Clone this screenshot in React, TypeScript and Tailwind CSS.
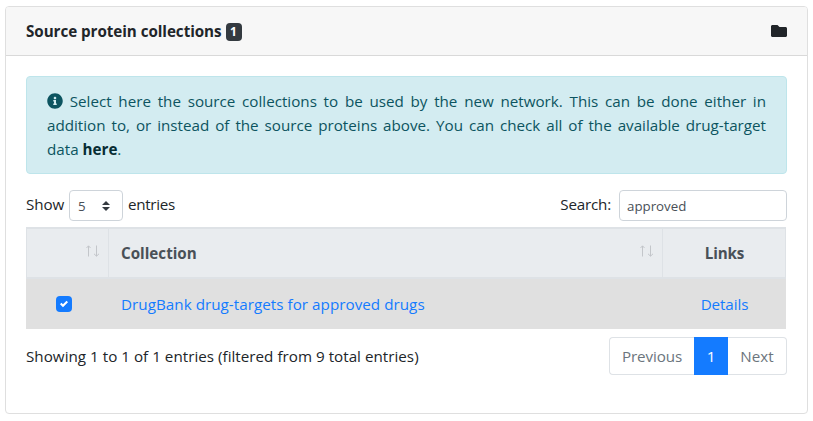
import React from "react";
import { FaFolder, FaInfoCircle } from "react-icons/fa";

function SortArrows() {
  return (
    <svg width="14" height="12" viewBox="0 0 14 12" fill="none" stroke="#c3c6ca" strokeWidth="1">
      <path d="M2.5 11.5V1M0.5 3L2.5 0.8L4.5 3" />
      <path d="M10.5 0.5V11M8 8.8L10.5 11.2L13 8.8" />
    </svg>
  );
}

function Header() {
  return (
    <div className="flex h-[49px] items-center justify-between border-b border-[#d9d9d9] bg-[#f7f7f7] px-5 pb-px">
      <div className="flex items-center font-bold">
        <span className="tracking-[-0.05px]">Source protein collections</span>
        <span className="ml-1 mt-0.5 flex h-[18px] w-4 items-center justify-center rounded bg-[#343a40] text-xs text-white">1</span>
      </div>
      <FaFolder className="size-4 text-[#212529]" />
    </div>
  );
}

function Notice() {
  return (
    <div className="h-[98px] rounded border border-[#bee5eb] bg-[#d3ecf1] px-5 py-3 text-justify leading-6 text-[#0c5460]">
      <FaInfoCircle className="inline size-4 align-[-2px]" /> Select here the source collections to be used by the
      new network. This can be done either in addition to, or instead of the source proteins above. You can check all of
      the available drug-target data <a className="font-bold text-[#062c33]">here</a>.
    </div>
  );
}

function Controls() {
  return (
    <div className="mt-4 flex h-[31px] justify-between">
      <div className="flex items-center">
        <span className="-mt-1 w-[38px] tracking-[-0.1px]">Show</span>
        <div className="ml-[5px] flex h-[31px] w-[54px] items-center justify-between rounded border border-[#ced4da] pl-2 pr-3 text-[13.3px] text-[#495057]">
          5
          <svg width="8" height="10" viewBox="0 0 8 10" fill="#343a40">
            <path d="M4 0L8 4H0zM4 10L0 6h8z" />
          </svg>
        </div>
        <span className="-mt-1 ml-[5px] tracking-[-0.3px]">entries</span>
      </div>
      <div className="flex items-center">
        <span className="-mt-1 tracking-[-0.2px]">Search:</span>
        <input
          className="ml-2 h-[31px] w-[168px] rounded border border-[#ced4da] bg-white px-[7px] text-[13.3px] text-[#495057]"
          defaultValue="approved"
        />
      </div>
    </div>
  );
}

function CollectionTable() {
  return (
    <div className="mt-1.5 w-[760px]">
      <div className="grid h-[52px] grid-cols-[83px_554px_123px] border-b-2 border-t-2 border-[#dee2e6] bg-[#e9ecef] font-bold text-[#495057]">
        <div className="flex items-center justify-end border-x border-[#dee2e6] pb-1 pr-2">
          <SortArrows />
        </div>
        <div className="flex items-center justify-between border-r border-[#dee2e6] pl-3 pr-2">
          <span>Collection</span>
          <span className="pb-1"><SortArrows /></span>
        </div>
        <div className="flex items-center justify-center border-r border-[#dee2e6] pl-px tracking-[-0.1px]">Links</div>
      </div>
      <div className="grid h-[50px] grid-cols-[83px_554px_123px] items-center bg-[#e0e0e0] text-[#147bff]">
        <div className="pl-[30px]">
          <div className="flex size-4 items-center justify-center rounded bg-[#147bff]">
            <svg width="8" height="8" viewBox="0 0 8 8" fill="#fff">
              <path d="M6.564.75l-3.59 3.612-1.538-1.55L0 4.26 2.974 7.25 8 2.193z" />
            </svg>
          </div>
        </div>
        <a className="pl-3 tracking-[0.04px]">DrugBank drug-targets for approved drugs</a>
        <a className="text-center tracking-[-0.1px]">Details</a>
      </div>
    </div>
  );
}

function Footer() {
  return (
    <div className="mt-2 flex h-[38px] justify-between">
      <span className="pt-[7px] tracking-[0.02px]">Showing 1 to 1 of 1 entries (filtered from 9 total entries)</span>
      <div className="flex w-[178px] text-[#6c757d]">
        <a className="flex w-[85px] items-center justify-center rounded-l border border-r-0 border-[#dee2e6] tracking-[-0.1px]">Previous</a>
        <a className="flex w-[34px] items-center justify-center bg-[#147bff] text-white">1</a>
        <a className="flex w-[59px] items-center justify-center rounded-r border border-l-0 border-[#dee2e6]">Next</a>
      </div>
    </div>
  );
}

export default function App() {
  return (
    <div className="h-[421px] bg-white pl-[5px] pt-1.5 font-['Open_Sans','Noto_Sans',sans-serif] text-[15.2px] leading-6 text-[#212529]">
      <div className="h-[408px] w-[803px] overflow-hidden rounded border border-[#dfdfdf]">
        <Header />
        <div className="px-5 pt-5">
          <Notice />
          <Controls />
          <CollectionTable />
          <Footer />
        </div>
      </div>
    </div>
  );
}
